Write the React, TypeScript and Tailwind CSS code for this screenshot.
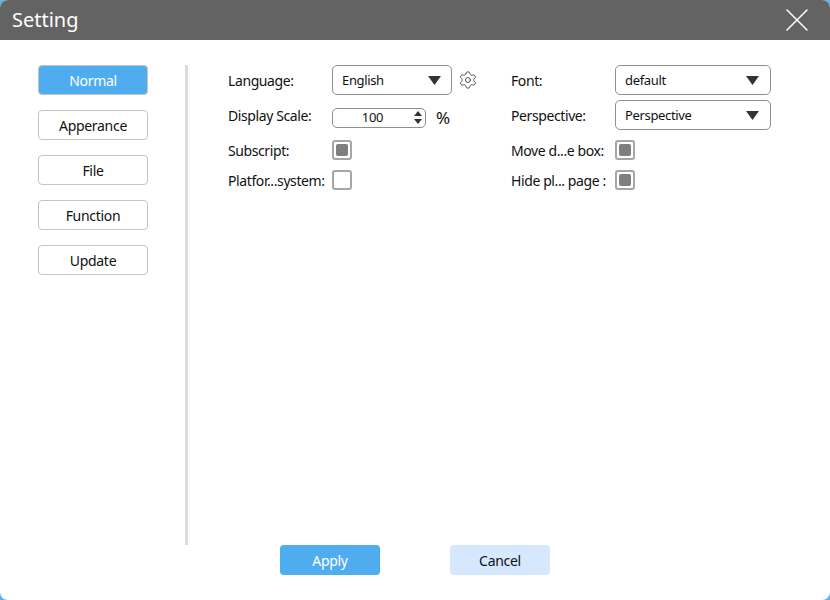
import React from "react";
import { Settings, X } from "lucide-react";

const navItems = ["Normal", "Apperance", "File", "Function", "Update"];

function Caret() {
  return (
    <svg width="13" height="9" viewBox="0 0 13 9" className="shrink-0">
      <path d="M0 0H13L6.5 9Z" fill="#333333" />
    </svg>
  );
}

function Select({ value, className }: { value: string; className: string }) {
  return (
    <div className={`flex h-[30px] items-center justify-between rounded-[5px] border border-[#8f8f8f] pl-[9px] ${className}`}>
      <span className="pt-[1px] text-[13px] tracking-[-0.35px] text-[#111111]">{value}</span>
      <Caret />
    </div>
  );
}

function Check({ checked }: { checked?: boolean }) {
  return (
    <div className="flex h-[20px] w-[20px] items-center justify-center rounded-[3px] border-2 border-[#a6a6a6] bg-white">
      {checked && <div className="h-[12px] w-[12px] rounded-[2px] bg-[#7f7f7f]" />}
    </div>
  );
}

function Label({ children }: { children: React.ReactNode }) {
  return <span className="w-[104px] shrink-0 whitespace-nowrap text-[14px] tracking-[-0.4px] text-[#111111]">{children}</span>;
}

export default function App() {
  return (
    <div className="h-[600px] w-[830px] bg-[#5cb3f2] [font-family:'Noto_Sans',sans-serif]">
      <div className="flex h-full w-full flex-col overflow-hidden rounded-[8px] bg-white">
        <div className="flex h-[40px] shrink-0 items-center justify-between bg-[#636363] pl-[12px] pr-[13px]">
          <span className="text-[20px] text-white">Setting</span>
          <X size={40} strokeWidth={1.5} color="#ffffff" absoluteStrokeWidth />
        </div>

        <div className="flex h-[505px] shrink-0 pl-[38px] pt-[25px]">
          <div className="flex w-[110px] flex-col gap-[15px]">
            {navItems.map((item, i) => (
              <div
                key={item}
                className={`flex h-[30px] items-center justify-center rounded-[4px] border border-[#c4c4c4] text-[14px] tracking-[-0.3px] ${
                  i === 0 ? "bg-[#4fadef] text-white" : "bg-white text-[#111111]"
                }`}
              >
                {item}
              </div>
            ))}
          </div>

          <div className="ml-[37px] h-[480px] w-[3px] bg-[#dcdcdc]" />

          <div className="ml-[40px] flex gap-[33px]">
            <div className="flex w-[250px] flex-col gap-[5px]">
              <div className="flex h-[30px] items-center">
                <Label>Language:</Label>
                <Select value="English" className="w-[121px] pr-[10px]" />
                <Settings size={20} strokeWidth={1} color="#333333" className="ml-[6px]" />
              </div>
              <div className="flex h-[30px] items-center">
                <Label>Display Scale:</Label>
                <div className="mt-[5px] flex h-[20px] w-[94px] items-center rounded-[5px] border border-[#8f8f8f]">
                  <span className="flex-1 pr-[2px] text-center text-[13px] tracking-[-0.3px] text-[#111111]">100</span>
                  <svg width="8" height="13" viewBox="0 0 8 13" className="mr-[3px]">
                    <path d="M4 0L8 5H0Z M0 8H8L4 13Z" fill="#333333" />
                  </svg>
                </div>
                <span className="ml-[10px] mt-[6px] text-[17px] text-[#111111]">%</span>
              </div>
              <div className="flex h-[30px] items-center">
                <Label>Subscript:</Label>
                <Check checked />
              </div>
              <div className="-mt-[5px] flex h-[30px] items-center">
                <Label>Platfor...system:</Label>
                <Check />
              </div>
            </div>

            <div className="flex w-[260px] flex-col gap-[5px]">
              <div className="flex h-[30px] items-center">
                <Label>Font:</Label>
                <Select value="default" className="w-[156px] pr-[11px]" />
              </div>
              <div className="flex h-[30px] items-center">
                <Label>Perspective:</Label>
                <Select value="Perspective" className="w-[156px] pr-[11px]" />
              </div>
              <div className="flex h-[30px] items-center">
                <Label>Move d...e box:</Label>
                <Check checked />
              </div>
              <div className="-mt-[5px] flex h-[30px] items-center">
                <Label>Hide pl... page :</Label>
                <Check checked />
              </div>
            </div>
          </div>
        </div>

        <div className="flex gap-[70px] pl-[280px]">
          <div className="flex h-[30px] w-[100px] items-center justify-center rounded-[4px] bg-[#4fadef] text-[14px] tracking-[-0.3px] text-white">Apply</div>
          <div className="flex h-[30px] w-[100px] items-center justify-center rounded-[4px] bg-[#d6e8fd] text-[14px] tracking-[-0.3px] text-[#111111]">Cancel</div>
        </div>
      </div>
    </div>
  );
}
